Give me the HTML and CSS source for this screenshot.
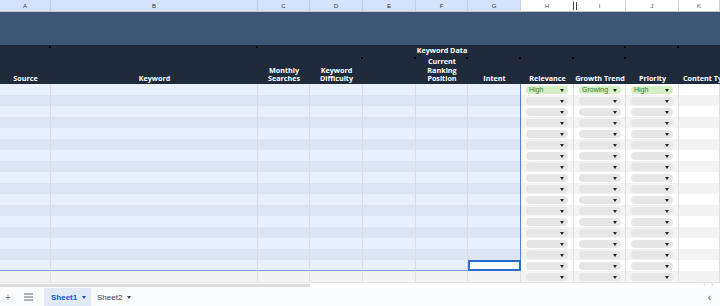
FILE: index.html
```html
<!DOCTYPE html>
<html>
<head>
    <title>Keyword Research</title>
    <link rel="stylesheet" href="styles.css">
</head>
<body>
    <div class="sheet">
        <div class="grid letters" id="letters"></div>
        <div class="band"></div>
        <div class="grid heads" id="heads"></div>
        <div class="rows" id="rows"></div>
        <div class="hscroll">
            <div class="thumb"></div>
            <div class="nudge">‹ ›</div>
        </div>
        <div class="tabs">
            <span class="tab-icon">+</span>
            <span class="tab-icon menu">
                <svg width="9" height="8" viewBox="0 0 9 8"><path d="M0 1h9M0 4h9M0 7h9" stroke="#6b6b6b" stroke-width="1"/></svg>
            </span>
            <div class="tab active">Sheet1 <span class="caret"></span></div>
            <div class="tab">Sheet2 <span class="caret"></span></div>
            <span class="collapse">‹</span>
        </div>
    </div>

    <script>
        const letters = ['A', 'B', 'C', 'D', 'E', 'F', 'G', 'H', 'I', 'J', 'K'];
        const heads = [
            'Source', 'Keyword', 'Monthly<br>Searches', 'Keyword<br>Difficulty', '',
            '<span class="nowrap">Keyword Data</span>Current<br>Ranking<br>Position',
            'Intent', 'Relevance', 'Growth Trend', 'Priority', '<span class="nowrap">Content Type</span>'
        ];
        // little note markers in the header row: [column, top?]
        const marks = [[0, true], [1, true], [3, false], [4, false], [5, false], [6, false], [7, false], [8, false], [8, true], [9, true]];
        const firstRow = { 7: 'High', 8: 'Growing', 9: 'High' };
        const rowCount = 18;
        const selectedRows = 17;

        const lettersEl = document.getElementById('letters');
        letters.forEach((l, i) => {
            const div = document.createElement('div');
            div.className = 'letter' + (i < 7 ? ' picked' : '');
            div.textContent = l;
            if (l === 'H') div.innerHTML += '<span class="resize"></span>';
            lettersEl.appendChild(div);
        });

        const headsEl = document.getElementById('heads');
        heads.forEach((h, i) => {
            const div = document.createElement('div');
            div.className = 'head';
            div.innerHTML = '<span class="label">' + h + '</span>';
            marks.filter(m => m[0] === i).forEach(m => {
                div.innerHTML += '<span class="mark ' + (m[1] ? 'top' : 'mid') + '"></span>';
            });
            headsEl.appendChild(div);
        });

        const rowsEl = document.getElementById('rows');
        for (let r = 0; r < rowCount; r++) {
            const row = document.createElement('div');
            row.className = 'grid row' + (r % 2 ? ' odd' : '');
            letters.forEach((l, c) => {
                const cell = document.createElement('div');
                cell.className = 'cell';
                if (r < selectedRows && c < 7) {
                    cell.classList.add('sel');
                    if (c === 6) cell.classList.add('sel-right');
                    if (r === selectedRows - 1) cell.classList.add('sel-bottom');
                    if (r === selectedRows - 1 && c === 6) cell.classList.add('active');
                }
                if (c >= 7 && c <= 9) {
                    const chip = document.createElement('div');
                    chip.className = 'chip' + (r === 0 ? ' green' : '');
                    chip.innerHTML = (r === 0 ? firstRow[c] : '') + '<span class="arrow"></span>';
                    cell.appendChild(chip);
                }
                row.appendChild(cell);
            });
            rowsEl.appendChild(row);
        }
    </script>
</body>
</html>
```

FILE: styles.css
```css
html, body {
    margin: 0;
    padding: 0;
    background: #fff;
    font-family: 'Open Sans', Arial, sans-serif;
}
.sheet {
    width: 720px;
    height: 306px;
    overflow: hidden;
    display: flex;
    flex-direction: column;
}
.grid {
    display: grid;
    grid-template-columns: 51px 207px 52px 53px 53px 52px 53px 53px 52px 53px 41px;
}
.letters {
    height: 12px;
    border-bottom: 1px solid #c7c7c7;
    box-sizing: border-box;
}
.letter {
    position: relative;
    font-family: 'Liberation Sans', Arial, sans-serif;
    font-size: 6px;
    color: #555;
    display: flex;
    align-items: center;
    justify-content: center;
    border-right: 1px solid #d0d0d0;
    background: #fff;
}
.letter.picked {
    background: #d3e3fd;
    color: #333;
    border-right-color: #c2cfe6;
}
.resize {
    position: absolute;
    right: -4px;
    top: 2px;
    width: 2px;
    height: 8px;
    border-left: 1px solid #444;
    border-right: 1px solid #444;
    box-sizing: content-box;
    z-index: 2;
}
.band {
    height: 33px;
    background: #3c5673;
}
.heads {
    height: 39px;
    background: #1f2b3a;
}
.head {
    position: relative;
    display: flex;
    align-items: flex-end;
    justify-content: center;
    padding-bottom: 1px;
    color: #fff;
    font-weight: 700;
    font-size: 7.2px;
    line-height: 8.7px;
    text-align: center;
    overflow: visible;
}
.head .label {
    display: block;
}
.head .nowrap {
    display: block;
    white-space: nowrap;
    margin-bottom: 2px;
}
.head:last-child .nowrap {
    margin-bottom: 0;
    margin-left: 4px;
    text-align: left;
}
.head:last-child {
    justify-content: flex-start;
    overflow: hidden;
}
.mark {
    position: absolute;
    right: 0;
    width: 2px;
    height: 2px;
    background: #000;
}
.mark.top { top: 1px; }
.mark.mid { top: 12px; }
.rows {
    display: flex;
    flex-direction: column;
}
.row {
    height: 11px;
    background: #fff;
}
.row.odd {
    background: #f3f3f3;
}
.cell {
    box-sizing: border-box;
    border-right: 1px solid #e0e0e0;
    display: flex;
    align-items: center;
}
.cell.sel {
    background: #e8f0fe;
    border-right-color: #d4dced;
}
.row.odd .cell.sel {
    background: #dde5f3;
}
.cell.sel-right {
    border-right: 1px solid #4f7fd6;
}
.cell.sel-bottom {
    border-bottom: 1px solid #7b9bd4;
}
.row .cell.active {
    background: #fff;
    border: 2px solid #2a6bd6;
}
.chip {
    position: relative;
    box-sizing: border-box;
    height: 8px;
    width: 42px;
    margin-left: 5px;
    border-radius: 4px;
    background: #e6e6e6;
    font-family: 'Liberation Sans', Arial, sans-serif;
    font-size: 7px;
    line-height: 8px;
    padding-left: 3px;
    color: #2f7d32;
}
.chip.green {
    background: #d5efc4;
}
.arrow {
    position: absolute;
    right: 4px;
    top: 3px;
    width: 0;
    height: 0;
    border-left: 2.5px solid transparent;
    border-right: 2.5px solid transparent;
    border-top: 3px solid #222;
}
.hscroll {
    position: relative;
    height: 6px;
    border-top: 1px solid #e3e3e3;
    box-sizing: border-box;
}
.thumb {
    margin-top: 1px;
    width: 310px;
    height: 3px;
    background: #dadce0;
}
.nudge {
    position: absolute;
    right: 5px;
    top: -3px;
    font-size: 6px;
    color: #999;
    letter-spacing: 2px;
}
.tabs {
    flex: 1;
    background: #f9fbfd;
    display: flex;
    align-items: stretch;
    font-family: 'Liberation Sans', Arial, sans-serif;
    font-size: 8px;
    color: #444;
}
.tab-icon {
    display: flex;
    align-items: center;
    justify-content: center;
    width: 14px;
    margin-left: 1px;
    color: #777;
    font-size: 10px;
}
.tab-icon.menu {
    margin-left: 6px;
    margin-right: 9px;
}
.tab {
    display: flex;
    align-items: center;
    padding: 0 6px;
    gap: 5px;
}
.tab.active {
    background: #e1e9f7;
    color: #0b57d0;
    font-weight: 700;
    padding: 0 7px;
    width: 47px;
    box-sizing: border-box;
}
.caret {
    width: 0;
    height: 0;
    border-left: 2.5px solid transparent;
    border-right: 2.5px solid transparent;
    border-top: 3px solid currentColor;
}
.collapse {
    margin-left: auto;
    margin-right: 9px;
    display: flex;
    align-items: center;
    color: #555;
    font-size: 10px;
}
```
